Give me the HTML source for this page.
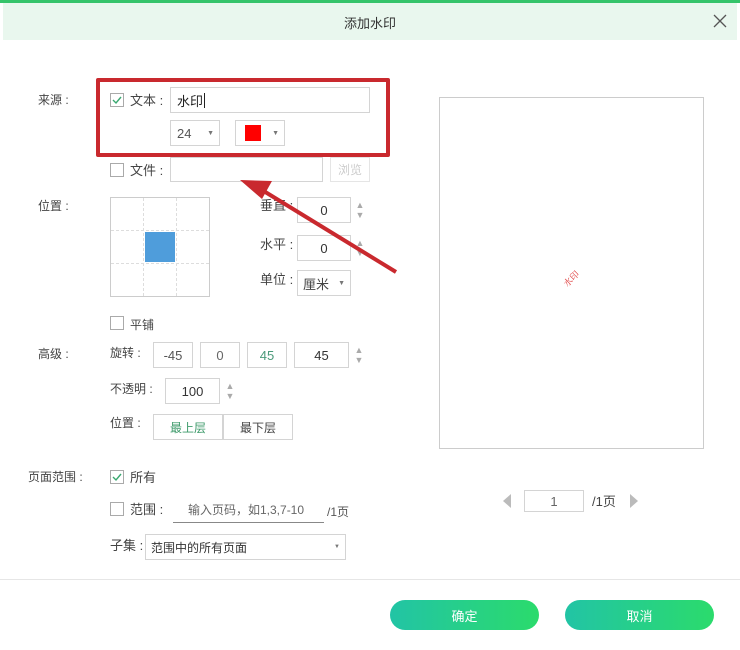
<!DOCTYPE html>
<html><head><meta charset="utf-8"><style>
*{box-sizing:border-box;margin:0;padding:0}
body{width:740px;height:650px;background:#fff;position:relative;overflow:hidden;font-family:"Liberation Sans","Noto Sans CJK SC",sans-serif;font-size:12px;color:#333}
.a{position:absolute}
.box{position:absolute;border:1px solid #d4d4d4;background:#fff;font-size:13px;display:flex;align-items:center;justify-content:center}
.cb{position:absolute;width:14px;height:14px;border:1px solid #aaa;background:#fff}
.lbl{position:absolute;font-size:12px;color:#444;line-height:14px}
.sp{position:absolute;width:10px;font-size:9px;color:#aaa;line-height:10px;text-align:center}
.btn{position:absolute;height:30px;width:149px;border-radius:15px;background:linear-gradient(90deg,#22c4a5,#2bdb6c);color:#fff;font-size:13px;display:flex;align-items:center;justify-content:center}
</style></head><body>
<div class="a" style="left:0;top:0;width:740px;height:3px;background:#35c46a"></div>
<div class="a" style="left:3px;top:3px;width:734px;height:37px;background:#e9f7ee"></div>
<div class="a" style="left:0;top:13px;width:740px;text-align:center;font-size:13px;color:#333">添加水印</div>
<svg class="a" style="left:713px;top:14px" width="14" height="14"><path d="M1 1L13 13M13 1L1 13" stroke="#555" stroke-width="1.3"/></svg>

<div class="lbl" style="left:38px;top:93px">来源 :</div>
<div class="lbl" style="left:38px;top:199px">位置 :</div>
<div class="lbl" style="left:38px;top:347px">高级 :</div>
<div class="lbl" style="left:28px;top:470px">页面范围 :</div>

<div class="cb" style="left:110px;top:93px"></div>
<svg class="a" style="left:112px;top:95px" width="10" height="10"><path d="M1 5L4 8L9 2" stroke="#3aa870" fill="none" stroke-width="1.4"/></svg>
<div class="lbl" style="left:130px;top:94px;font-size:13px">文本 :</div>
<div class="box" style="left:170px;top:87px;width:200px;height:26px;justify-content:flex-start;padding-left:6px;color:#222">水印<span style="display:inline-block;width:1px;height:15px;background:#222;margin-left:1px"></span></div>
<div class="box" style="left:170px;top:120px;width:50px;height:26px;justify-content:flex-start;padding-left:6px;color:#555">24<span style="position:absolute;right:5px;font-size:7px;color:#777">▼</span></div>
<div class="box" style="left:235px;top:120px;width:50px;height:26px;justify-content:flex-start;padding-left:9px"><span style="width:16px;height:16px;background:#f00;display:block"></span><span style="position:absolute;right:5px;font-size:7px;color:#777">▼</span></div>
<div class="a" style="left:96px;top:78px;width:294px;height:79px;border:4px solid #c9292e;border-radius:2px"></div>

<div class="cb" style="left:110px;top:163px"></div>
<div class="lbl" style="left:130px;top:164px;font-size:13px">文件 :</div>
<div class="box" style="left:170px;top:157px;width:153px;height:25px"></div>
<div class="box" style="left:330px;top:157px;width:40px;height:25px;border-color:#e5e5e5;color:#ccc;font-size:12px">浏览</div>

<div class="a" style="left:110px;top:197px;width:100px;height:100px;border:1px solid #ccc"></div>
<div class="a" style="left:143px;top:198px;height:98px;border-left:1px dashed #ddd"></div>
<div class="a" style="left:176px;top:198px;height:98px;border-left:1px dashed #ddd"></div>
<div class="a" style="left:111px;top:230px;width:98px;border-top:1px dashed #ddd"></div>
<div class="a" style="left:111px;top:263px;width:98px;border-top:1px dashed #ddd"></div>
<div class="a" style="left:145px;top:232px;width:30px;height:30px;background:#4f9ddb"></div>

<div class="lbl" style="left:260px;top:199px;font-size:13px">垂直 :</div>
<div class="box" style="left:297px;top:197px;width:54px;height:26px">0</div>
<div class="sp" style="left:355px;top:200px">▲<br>▼</div>
<div class="lbl" style="left:260px;top:238px;font-size:13px">水平 :</div>
<div class="box" style="left:297px;top:235px;width:54px;height:26px">0</div>
<div class="sp" style="left:355px;top:238px">▲<br>▼</div>
<div class="lbl" style="left:260px;top:273px;font-size:13px">单位 :</div>
<div class="box" style="left:297px;top:270px;width:54px;height:26px;justify-content:flex-start;padding-left:5px;color:#444">厘米<span style="position:absolute;right:5px;font-size:7px;color:#777">▼</span></div>

<svg class="a" style="left:0;top:0" width="740" height="650"><line x1="396" y1="272" x2="262" y2="190" stroke="#c9292e" stroke-width="4"/><path d="M240 180L272 181L262 199Z" fill="#c9292e"/></svg>

<div class="cb" style="left:110px;top:316px"></div>
<div class="lbl" style="left:130px;top:318px">平铺</div>
<div class="lbl" style="left:110px;top:346px">旋转 :</div>
<div class="box" style="left:153px;top:342px;width:40px;height:26px;color:#555">-45</div>
<div class="box" style="left:200px;top:342px;width:40px;height:26px;color:#666">0</div>
<div class="box" style="left:247px;top:342px;width:40px;height:26px;color:#4a9a7a">45</div>
<div class="box" style="left:294px;top:342px;width:55px;height:26px">45</div>
<div class="sp" style="left:354px;top:345px">▲<br>▼</div>
<div class="lbl" style="left:110px;top:382px">不透明 :</div>
<div class="box" style="left:165px;top:378px;width:55px;height:26px">100</div>
<div class="sp" style="left:225px;top:381px">▲<br>▼</div>
<div class="lbl" style="left:110px;top:416px">位置 :</div>
<div class="box" style="left:153px;top:414px;width:70px;height:26px;color:#3d9a6a;font-size:12px">最上层</div>
<div class="box" style="left:223px;top:414px;width:70px;height:26px;color:#444;font-size:12px">最下层</div>

<div class="cb" style="left:110px;top:470px"></div>
<svg class="a" style="left:112px;top:472px" width="10" height="10"><path d="M1 5L4 8L9 2" stroke="#3aa870" fill="none" stroke-width="1.4"/></svg>
<div class="lbl" style="left:130px;top:471px;font-size:13px">所有</div>
<div class="cb" style="left:110px;top:502px"></div>
<div class="lbl" style="left:130px;top:503px;font-size:13px">范围 :</div>
<div class="lbl" style="left:188px;top:503px;color:#666">输入页码，如1,3,7-10</div>
<div class="a" style="left:173px;top:522px;width:151px;border-top:1px solid #888"></div>
<div class="lbl" style="left:327px;top:505px;color:#555">/1页</div>
<div class="lbl" style="left:110px;top:539px;font-size:13px">子集 :</div>
<div class="box" style="left:145px;top:534px;width:201px;height:26px;justify-content:flex-start;padding-left:5px;font-size:12px;color:#333">范围中的所有页面<span style="position:absolute;right:5px;font-size:6px;color:#777">▼</span></div>

<div class="a" style="left:439px;top:97px;width:265px;height:352px;border:1px solid #ccc"></div>
<div class="a" style="left:562px;top:272px;font-size:9px;color:#d33;transform:rotate(-45deg);font-family:'Noto Serif CJK SC',serif">水印</div>
<svg class="a" style="left:503px;top:494px" width="9" height="14"><path d="M8 0L0 7L8 14Z" fill="#bbb"/></svg>
<div class="box" style="left:524px;top:490px;width:60px;height:22px;color:#666">1</div>
<div class="lbl" style="left:592px;top:495px;font-size:13px;color:#444">/1页</div>
<svg class="a" style="left:630px;top:494px" width="9" height="14"><path d="M0 0L8 7L0 14Z" fill="#bbb"/></svg>

<div class="a" style="left:0;top:579px;width:740px;border-top:1px solid #e6e6e6"></div>
<div class="btn" style="left:390px;top:600px">确定</div>
<div class="btn" style="left:565px;top:600px">取消</div>
</body></html>
